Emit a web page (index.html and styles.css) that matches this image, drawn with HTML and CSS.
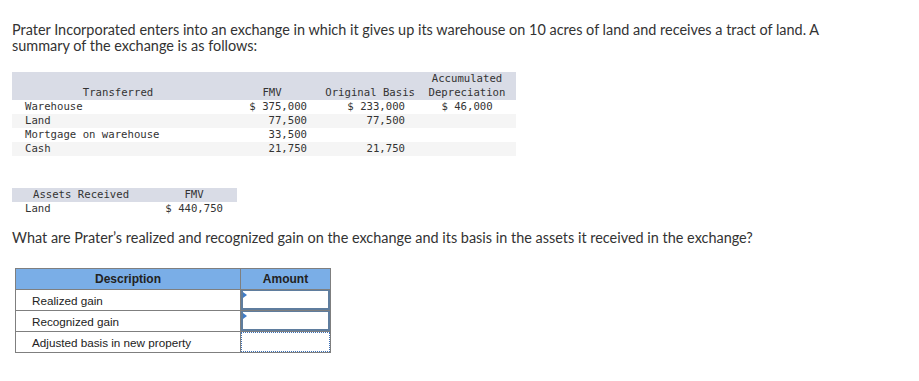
FILE: index.html
```html
<!DOCTYPE html>
<html>
<head>
<meta charset="utf-8">
<link rel="stylesheet" href="styles.css">
</head>
<body>
<p class="intro">Prater Incorporated enters into an exchange in which it gives up its warehouse on 10 acres of land and receives a tract of land. A summary of the exchange is as follows:</p>

<table class="mono t1">
  <colgroup><col class="w1"><col class="w2"><col class="w3"><col class="w4"></colgroup>
  <thead>
    <tr class="head">
      <th class="h1">Transferred</th>
      <th class="h2">FMV</th>
      <th class="h3">Original Basis</th>
      <th class="h4">Accumulated<br>Depreciation</th>
    </tr>
  </thead>
  <tbody>
    <tr><td class="label">Warehouse</td><td class="v2">$ 375,000</td><td class="v3">$ 233,000</td><td class="v4">$ 46,000</td></tr>
    <tr class="alt"><td class="label">Land</td><td class="v2">77,500</td><td class="v3">77,500</td><td></td></tr>
    <tr><td class="label">Mortgage on warehouse</td><td class="v2">33,500</td><td></td><td></td></tr>
    <tr class="alt"><td class="label">Cash</td><td class="v2">21,750</td><td class="v3">21,750</td><td></td></tr>
  </tbody>
</table>

<table class="mono t2">
  <colgroup><col class="x1"><col class="x2"></colgroup>
  <thead>
    <tr class="head"><th class="g1">Assets Received</th><th class="g2">FMV</th></tr>
  </thead>
  <tbody>
    <tr><td class="label">Land</td><td class="u2">$ 440,750</td></tr>
  </tbody>
</table>

<p class="question">What are Prater’s realized and recognized gain on the exchange and its basis in the assets it received in the exchange?</p>

<table class="answer">
  <colgroup><col class="y1"><col class="y2"></colgroup>
  <thead>
    <tr><th>Description</th><th>Amount</th></tr>
  </thead>
  <tbody>
    <tr><td class="desc">Realized gain</td><td class="inp"><div class="box"><span class="tri"></span></div></td></tr>
    <tr><td class="desc">Recognized gain</td><td class="inp"><div class="box"><span class="tri"></span></div></td></tr>
    <tr><td class="desc">Adjusted basis in new property</td><td class="inp"><div class="box dotted"></div></td></tr>
  </tbody>
</table>
</body>
</html>
```

FILE: styles.css
```css
html, body {
  margin: 0;
  padding: 0;
  background: #fff;
}
body {
  padding: 22px 12px 0 12px;
  font-family: Lato, "Open Sans", sans-serif;
  color: #333;
}
.intro, .question {
  margin: 0;
  font-size: 14.45px;
  line-height: 16px;
  width: 860px;
}
.question {
  width: 900px;
  margin-top: 14px;
}
.mono {
  font-family: "DejaVu Sans Mono", "Liberation Mono", monospace;
  font-size: 10.65px;
  line-height: 14px;
  color: #333;
  border-collapse: collapse;
  border-spacing: 0;
  table-layout: fixed;
}
.mono th {
  font-weight: normal;
  vertical-align: bottom;
  padding: 0;
  white-space: nowrap;
}
.mono td {
  padding: 0;
  height: 14px;
  white-space: nowrap;
}
.head {
  background: #d9dce6;
}
.alt {
  background: #f5f5f5;
}
.label {
  padding-left: 13px !important;
  text-align: left;
}

/* Transferred table */
.t1 {
  margin-top: 18px;
  width: 504px;
}
.t1 .head th {
  height: 28px;
}
.w1 { width: 220px; }
.w2 { width: 80px; }
.w3 { width: 103px; }
.w4 { width: 101px; }
.h1 { text-align: center; padding-right: 8px !important; }
.h2 { text-align: center; }
.h3 { text-align: right; }
.h4 { text-align: center; padding-left: 3px !important; }
.v2 { text-align: right; padding-right: 5px !important; }
.v3 { text-align: right; padding-right: 10px !important; }
.v4 { text-align: center; padding-left: 3px !important; }

/* Assets received table */
.t2 {
  margin-top: 32px;
  width: 225px;
}
.x1 { width: 150px; }
.x2 { width: 75px; }
.g1 { text-align: left; padding-left: 21px !important; }
.g2 { text-align: center; padding-right: 11px !important; }
.u2 { text-align: right; padding-right: 14px !important; }

/* Answer table */
.answer {
  margin-top: 22px;
  margin-left: 3px;
  border-collapse: collapse;
  table-layout: fixed;
  width: 315px;
  font-family: "Liberation Sans", Arial, sans-serif;
  font-size: 11.7px;
  color: #222;
}
.y1 { width: 225px; }
.y2 { width: 90px; }
.answer th, .answer td {
  border: 1px solid #7f7f7f;
  padding: 0;
  height: 20px;
}
.answer th {
  background: #7aaee7;
  font-weight: bold;
  font-size: 12px;
  text-align: center;
  color: #222;
}
.answer td.desc {
  padding-left: 16px;
  text-align: left;
}
.answer td.inp {
  padding: 0;
  vertical-align: top;
}
.box {
  position: relative;
  height: 20px;
  box-sizing: border-box;
  border: 2px solid #5f7d9e;
  border-top-width: 1px;
  background: #fff;
}
.box.dotted {
  border: 1px dotted #3b6fb5;
}
.tri {
  position: absolute;
  left: 0;
  top: 1px;
  width: 0;
  height: 0;
  border-top: 3px solid transparent;
  border-bottom: 3px solid transparent;
  border-left: 4px solid #3f7cc9;
}
```
